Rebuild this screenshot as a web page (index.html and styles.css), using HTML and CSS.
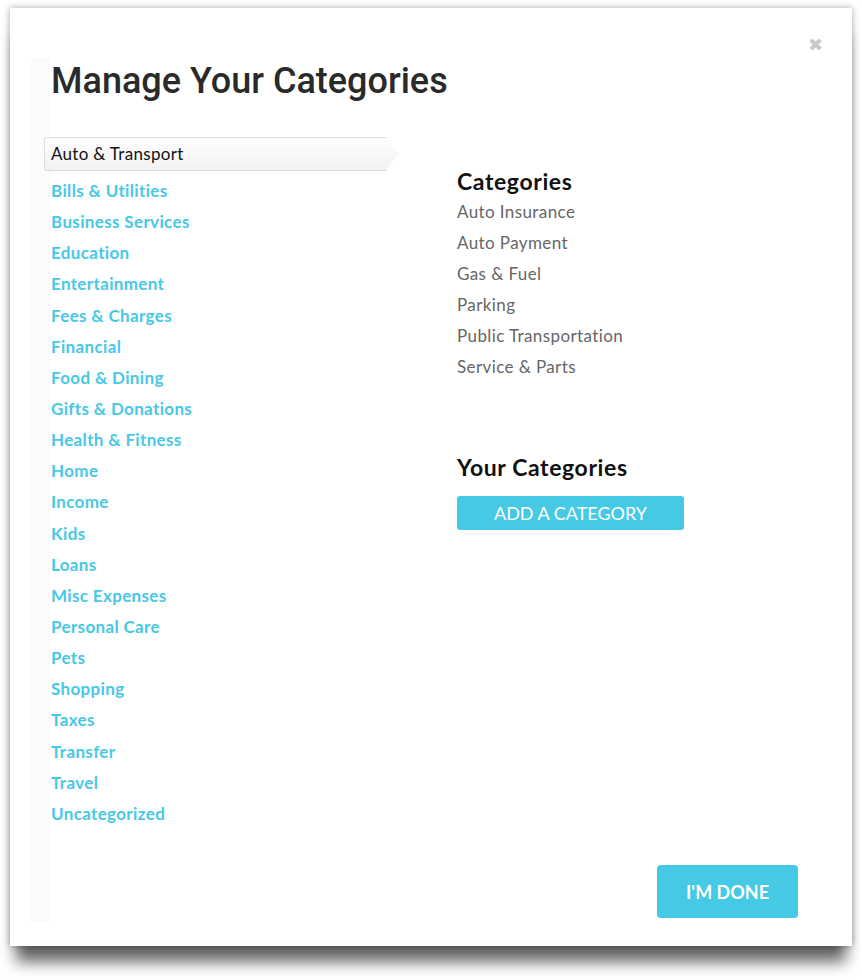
FILE: index.html
```html
<!DOCTYPE html>
<html>
<head>
<meta charset="utf-8">
<link rel="stylesheet" href="styles.css">
</head>
<body>
<div class="modal">
  <span class="close">&#x2716;</span>
  <div class="panel">
    <h1 class="title">Manage Your Categories</h1>
    <div class="columns">
      <ul class="groups">
        <li class="group selected">Auto &amp; Transport</li>
        <li class="group">Bills &amp; Utilities</li>
        <li class="group">Business Services</li>
        <li class="group">Education</li>
        <li class="group">Entertainment</li>
        <li class="group">Fees &amp; Charges</li>
        <li class="group">Financial</li>
        <li class="group">Food &amp; Dining</li>
        <li class="group">Gifts &amp; Donations</li>
        <li class="group">Health &amp; Fitness</li>
        <li class="group">Home</li>
        <li class="group">Income</li>
        <li class="group">Kids</li>
        <li class="group">Loans</li>
        <li class="group">Misc Expenses</li>
        <li class="group">Personal Care</li>
        <li class="group">Pets</li>
        <li class="group">Shopping</li>
        <li class="group">Taxes</li>
        <li class="group">Transfer</li>
        <li class="group">Travel</li>
        <li class="group">Uncategorized</li>
      </ul>
      <div class="details">
        <h2 class="sub first">Categories</h2>
        <ul class="cats">
          <li>Auto Insurance</li>
          <li>Auto Payment</li>
          <li>Gas &amp; Fuel</li>
          <li>Parking</li>
          <li>Public Transportation</li>
          <li>Service &amp; Parts</li>
        </ul>
        <h2 class="sub second">Your Categories</h2>
        <button class="add">ADD A CATEGORY</button>
      </div>
    </div>
    <div class="footer">
      <button class="done">I'M DONE</button>
    </div>
  </div>
</div>
</body>
</html>
```

FILE: styles.css
```css
html, body {
  margin: 0;
  padding: 0;
  background: #ffffff;
}
body {
  font-family: "Lato", "Noto Sans", sans-serif;
  padding: 8px 10px 34px 10px;
}
.modal {
  position: relative;
  width: 842px;
  height: 938px;
  box-sizing: border-box;
  background: #ffffff;
  padding: 50px 22px 24px 21px;
  box-shadow: 0 0 7px rgba(0,0,0,0.35), 0 22px 14px -6px rgba(0,0,0,0.6);
}
.close {
  position: absolute;
  left: 798px;
  top: 25px;
  font-size: 18px;
  color: #c9c9c9;
  line-height: 22px;
}
.panel {
  height: 864px;
  box-sizing: border-box;
  display: flex;
  flex-direction: column;
  padding: 2px 32px 4px 0;
  background: linear-gradient(to right, #fbfbfb 0, #fbfbfb 19px, #ffffff 19px);
}
.title {
  margin: 0 0 35px 20px;
  font-family: "Roboto", sans-serif;
  font-weight: 500;
  font-size: 36px;
  line-height: 42px;
  color: #2a2a2a;
  letter-spacing: 0;
}
.columns {
  display: flex;
}
.groups {
  list-style: none;
  margin: 0 0 0 13px;
  padding: 0;
  width: 413px;
}
.group {
  height: 31.15px;
  line-height: 31px;
  padding-left: 7px;
  font-size: 17px;
  font-weight: 700;
  letter-spacing: 0.35px;
  color: #48c8e6;
}
.group.selected {
  height: 34px;
  line-height: 34px;
  margin-bottom: 4px;
  width: 354px;
  box-sizing: border-box;
  color: #111;
  font-weight: 400;
  letter-spacing: 0.3px;
  background: linear-gradient(#ffffff, #f1f1f1);
  clip-path: polygon(0 0, 342px 0, 354px 17px, 342px 34px, 0 34px);
  box-shadow: inset 0 0 0 1px #dddddd;
  border-radius: 3px 0 0 3px;
}
.details {
  display: flex;
  flex-direction: column;
  align-items: flex-start;
}
.sub {
  margin: 0;
  font-size: 23px;
  line-height: 28px;
  font-weight: 700;
  letter-spacing: 0.6px;
  color: #111;
}
.sub.first {
  margin-top: 30px;
  margin-bottom: 1px;
}
.sub.second {
  margin-top: 71px;
}
.cats {
  list-style: none;
  margin: 0;
  padding: 0;
}
.cats li {
  height: 31px;
  line-height: 31px;
  font-size: 17px;
  letter-spacing: 0.4px;
  color: #666;
}
.add {
  margin-top: 15px;
  width: 227px;
  height: 34px;
  border: none;
  border-radius: 3px;
  background: #46c9e5;
  color: #fff;
  font-family: "Lato", sans-serif;
  font-size: 18px;
  padding: 0;
}
.footer {
  margin-top: auto;
  display: flex;
  justify-content: flex-end;
}
.done {
  width: 141px;
  height: 53px;
  border: none;
  border-radius: 4px;
  background: #46c9e5;
  color: #fff;
  font-family: "Lato", sans-serif;
  font-weight: 700;
  font-size: 18px;
  padding: 0;
}
```
